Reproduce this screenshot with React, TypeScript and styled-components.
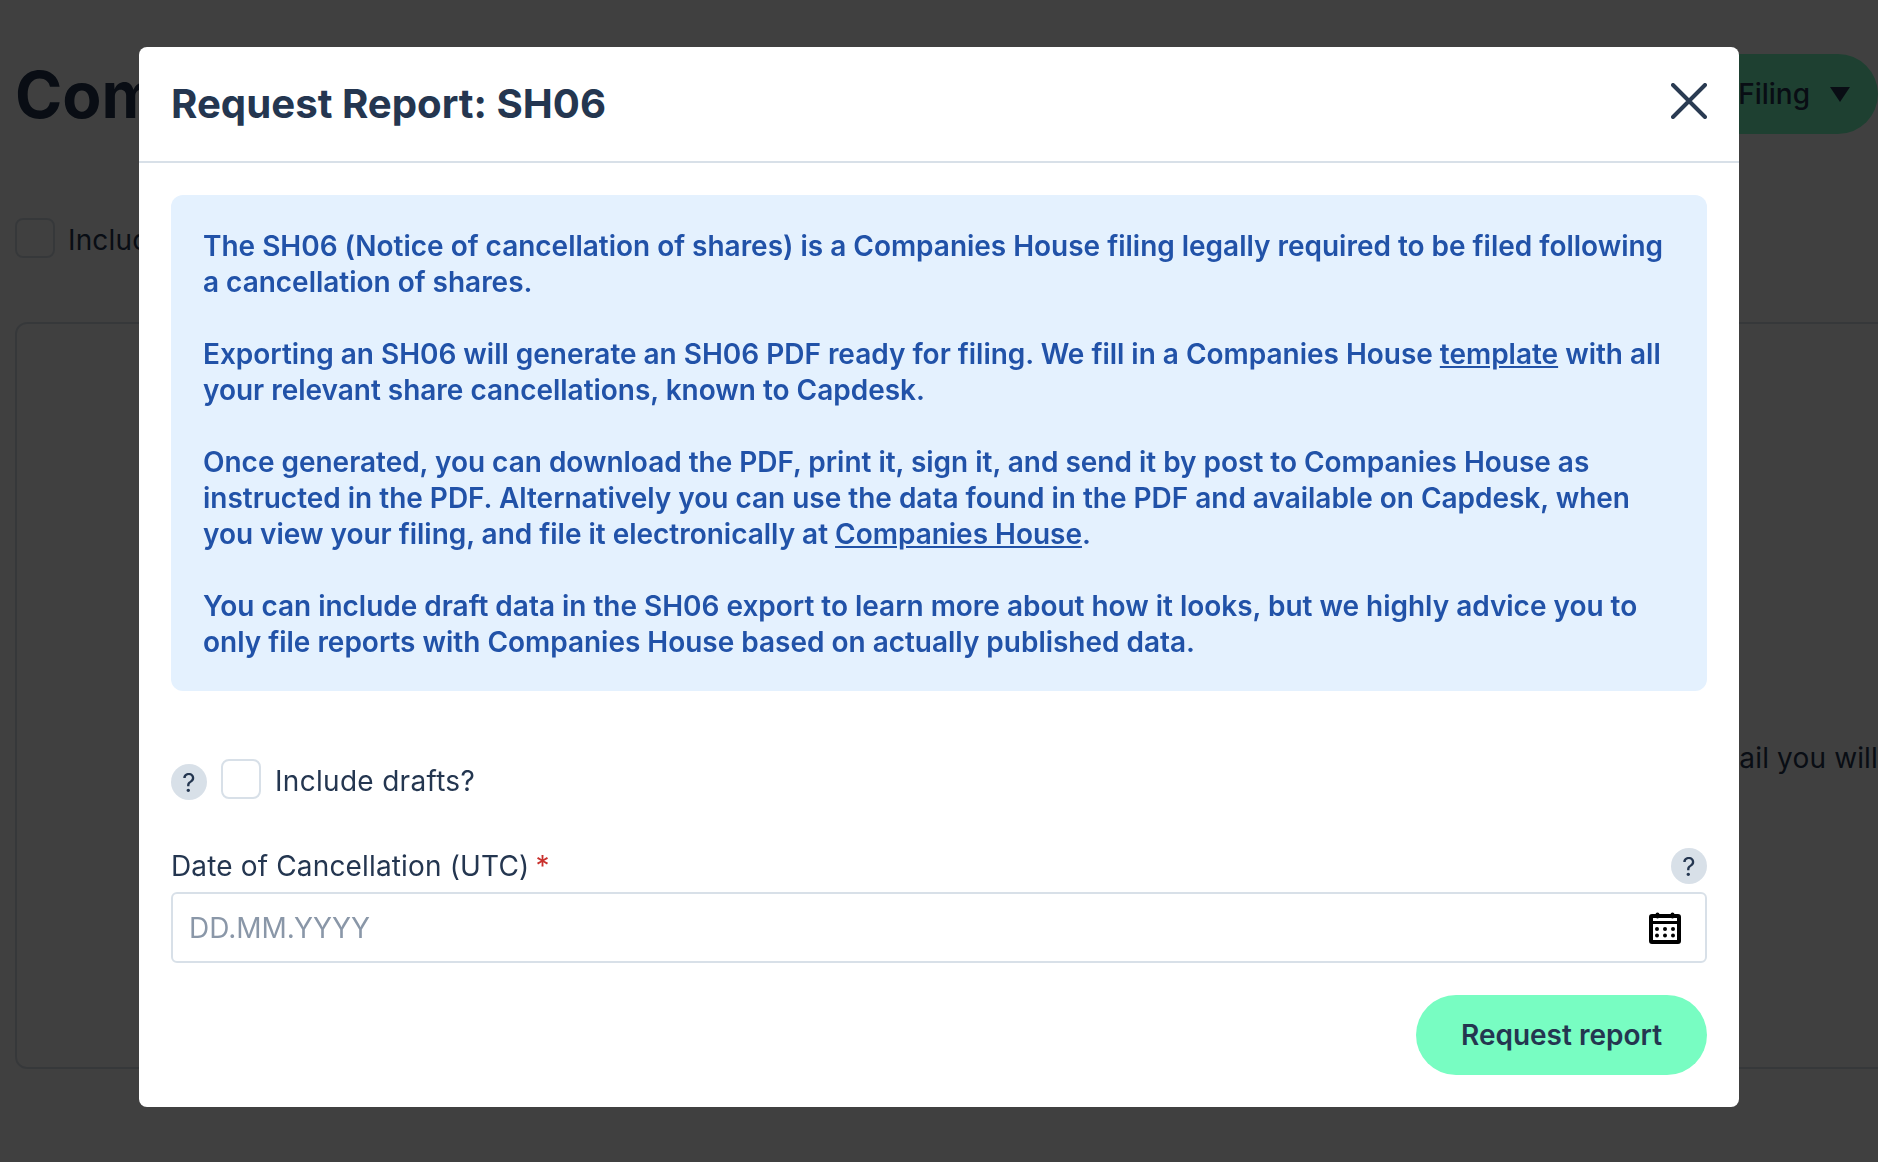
import React from "react";
import styled, { createGlobalStyle } from "styled-components";

const Global = createGlobalStyle`
  html, body { margin: 0; padding: 0; width: 1878px; height: 1162px; overflow: hidden; background: #fff; }
  body { font-family: Inter, "Liberation Sans", sans-serif; color: #243650; }
  * { box-sizing: border-box; }
`;

const Page = styled.div`
  width: 1878px;
  height: 1162px;
  overflow: hidden;
  padding: 54px 0 0 15px;
  display: flex;
  flex-direction: column;
`;
const PageHead = styled.header`
  display: flex;
  justify-content: space-between;
  align-items: center;
  height: 80px;
`;
const PageTitle = styled.h1`
  margin: 0;
  font-size: 64px;
  font-weight: 700;
  color: #243650;
  white-space: nowrap;
`;
const FilingButton = styled.button`
  width: 178px;
  height: 80px;
  flex: none;
  border: 0;
  border-radius: 40px;
  background: #78fdc2;
  color: #243650;
  font: 500 28px Inter, sans-serif;
  display: flex;
  align-items: center;
  justify-content: flex-end;
  gap: 20px;
  padding: 0 28px 0 0;
`;
const Caret = styled.span`
  width: 0;
  height: 0;
  border-left: 10px solid transparent;
  border-right: 10px solid transparent;
  border-top: 15px solid #243650;
`;
const DraftRow = styled.label`
  display: flex;
  align-items: center;
  gap: 13px;
  margin-top: 84px;
  font-size: 28px;
  letter-spacing: 0.15px;
  color: #243650;
`;
const PageCheck = styled.span`
  width: 40px;
  height: 40px;
  border: 2px solid #d8e0e8;
  border-radius: 8px;
`;
const LowText = styled.span`
  padding-top: 4px;
`;
const PagePanel = styled.section`
  margin-top: 64px;
  height: 747px;
  margin-right: -40px;
  border: 2px solid #d8e0e8;
  border-radius: 12px;
  display: flex;
  justify-content: flex-end;
  padding: 417px 38px 0 0;
  font-size: 28px;
  letter-spacing: 0.15px;
  color: #243650;
`;

const Overlay = styled.div`
  position: fixed;
  inset: 0;
  background: rgba(0, 0, 0, 0.75);
`;
const Modal = styled.div`
  position: absolute;
  left: 139px;
  top: 47px;
  width: 1600px;
  height: 1060px;
  background: #fff;
  border-radius: 8px;
  color: #243650;
  display: flex;
  flex-direction: column;
`;
const ModalHeader = styled.div`
  height: 116px;
  flex: none;
  border-bottom: 2px solid #d8e0e8;
  padding: 0 32px;
  display: flex;
  align-items: center;
  justify-content: space-between;
`;
const ModalTitle = styled.h2`
  margin: 0;
  font-size: 40.2px;
  line-height: 1;
  font-weight: 700;
  color: #243650;
`;
const CloseButton = styled.button`
  border: 0;
  background: none;
  padding: 0;
  width: 36px;
  height: 36px;
  margin-bottom: 6px;
  display: block;
  color: #2a3b52;
  svg { display: block; }
`;
const ModalBody = styled.div`
  flex: 1;
  padding: 32px;
  display: flex;
  flex-direction: column;
`;
const InfoBox = styled.div`
  background: #e4f1fe;
  border-radius: 12px;
  padding: 33px 32px 31px;
  color: #2152a8;
  font-size: 28px;
  line-height: 36px;
  font-weight: 600;
  letter-spacing: -0.02px;
`;
const InfoPara = styled.p`
  margin: 0 0 36px;
  &:last-child { margin-bottom: 0; }
`;
const InfoLink = styled.a`
  color: inherit;
  text-decoration: underline;
`;
const CheckRow = styled.label`
  display: flex;
  align-items: flex-start;
  margin-top: 68px;
  height: 40px;
  font-size: 28px;
  letter-spacing: 0.3px;
  color: #243650;
`;
const HelpDot = styled.span`
  width: 36px;
  height: 36px;
  border-radius: 50%;
  flex: none;
  background: #d8e0e8;
  color: #243650;
  font-size: 26px;
  display: flex;
  align-items: center;
  justify-content: center;
`;
const HelpInRow = styled(HelpDot)`
  margin-top: 5px;
`;
const Check = styled.span`
  width: 40px;
  height: 40px;
  flex: none;
  border: 2px solid #d8e0e8;
  border-radius: 8px;
  margin: 0 14px;
`;
const CheckText = styled.span`
  padding-top: 5px;
`;
const FieldHead = styled.div`
  display: flex;
  align-items: center;
  justify-content: space-between;
  margin-top: 49px;
  height: 36px;
`;
const FieldLabel = styled.label`
  font-size: 28px;
  letter-spacing: 0.15px;
  color: #243650;
`;
const Required = styled.span`
  color: #c9302c;
  margin-left: 6px;
`;
const DateBox = styled.div`
  margin-top: 8px;
  height: 71px;
  border: 2px solid #d8e0e8;
  border-radius: 6px;
  padding: 0 24px 0 16px;
  display: flex;
  align-items: center;
  justify-content: space-between;
`;
const DateInput = styled.input`
  border: 0;
  outline: 0;
  flex: 1;
  padding: 0;
  font: 400 28px Inter, sans-serif;
  color: #243650;
  &::placeholder { color: #8a97a8; opacity: 1; }
`;
const Footer = styled.div`
  display: flex;
  justify-content: flex-end;
  margin-top: 32px;
`;
const SubmitButton = styled.button`
  width: 291px;
  height: 80px;
  border: 0;
  border-radius: 40px;
  background: #78fdc2;
  color: #243650;
  font: 600 28px Inter, sans-serif;
`;

const Calendar = () => (
  <svg width="32" height="32" viewBox="0 0 32 32" fill="none">
    <rect x="2" y="4" width="28" height="26" rx="1" stroke="#000" strokeWidth="4" />
    <rect x="2" y="9" width="28" height="3" fill="#000" />
    <rect x="6.5" y="0.5" width="4" height="6" rx="2" fill="#000" />
    <rect x="21.5" y="0.5" width="4" height="6" rx="2" fill="#000" />
    {[8, 16, 24].map((x) =>
      [17, 23.5].map((y) => <circle key={`${x}-${y}`} cx={x} cy={y} r="2" fill="#000" />)
    )}
  </svg>
);

export default function App() {
  return (
    <>
      <Global />
      <Page>
        <PageHead>
          <PageTitle>Company Filings</PageTitle>
          <FilingButton>
            Filing <Caret />
          </FilingButton>
        </PageHead>
        <DraftRow>
          <PageCheck />
          <LowText>Include drafts</LowText>
        </DraftRow>
        <PagePanel>ail you will</PagePanel>
      </Page>
      <Overlay>
        <Modal>
          <ModalHeader>
            <ModalTitle>Request Report: SH06</ModalTitle>
            <CloseButton aria-label="Close">
              <svg width="36" height="36" viewBox="0 0 36 36" fill="none">
                <path d="M2 2L34 34M34 2L2 34" stroke="currentColor" strokeWidth="4" strokeLinecap="round" />
              </svg>
            </CloseButton>
          </ModalHeader>
          <ModalBody>
            <InfoBox>
              <InfoPara>
                The SH06 (Notice of cancellation of shares) is a Companies House filing legally required to be filed following a cancellation of shares.
              </InfoPara>
              <InfoPara>
                Exporting an SH06 will generate an SH06 PDF ready for filing. We fill in a Companies House <InfoLink href="#">template</InfoLink> with all your relevant share cancellations, known to Capdesk.
              </InfoPara>
              <InfoPara>
                Once generated, you can download the PDF, print it, sign it, and send it by post to Companies House as instructed in the PDF. Alternatively you can use the data found in the PDF and available on Capdesk, when you view your filing, and file it electronically at <InfoLink href="#">Companies House</InfoLink>.
              </InfoPara>
              <InfoPara>
                You can include draft data in the SH06 export to learn more about how it looks, but we highly advice you to only file reports with Companies House based on actually published data.
              </InfoPara>
            </InfoBox>
            <CheckRow>
              <HelpInRow>?</HelpInRow>
              <Check />
              <CheckText>Include drafts?</CheckText>
            </CheckRow>
            <FieldHead>
              <FieldLabel>
                Date of Cancellation (UTC)<Required>*</Required>
              </FieldLabel>
              <HelpDot>?</HelpDot>
            </FieldHead>
            <DateBox>
              <DateInput placeholder="DD.MM.YYYY" />
              <Calendar />
            </DateBox>
            <Footer>
              <SubmitButton>Request report</SubmitButton>
            </Footer>
          </ModalBody>
        </Modal>
      </Overlay>
    </>
  );
}
